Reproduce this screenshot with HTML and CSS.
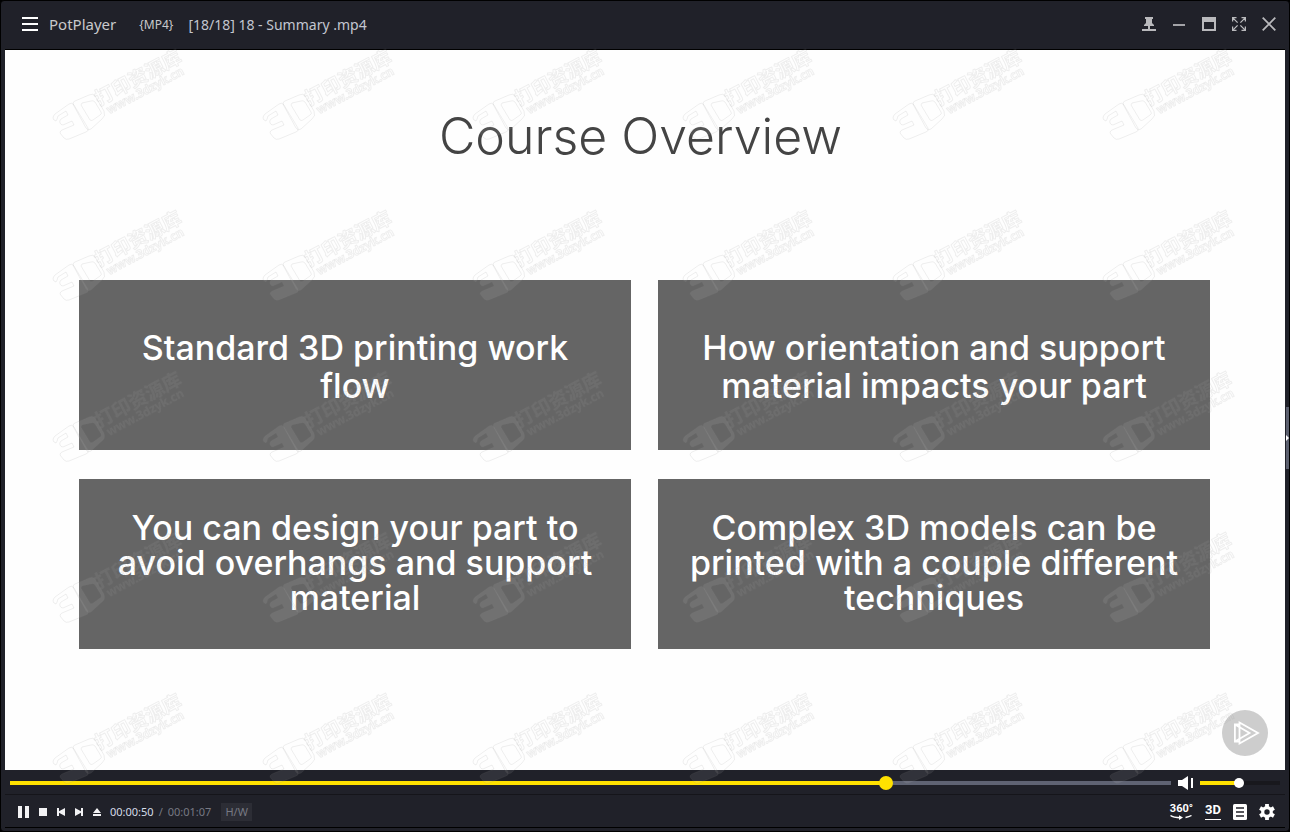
FILE: index.html
```html
<!DOCTYPE html>
<html lang="en">
<head>
<meta charset="utf-8">
<title>PotPlayer</title>
<link rel="stylesheet" href="styles.css">
</head>
<body>
<div class="player">
  <header class="titlebar">
    <button class="icon-btn menu" aria-label="Menu"><svg width="16" height="14" viewBox="0 0 16 14"><path d="M0 1h16M0 7h16M0 13h16" stroke="#fff" stroke-width="2"/></svg></button>
    <span class="app-name">PotPlayer</span>
    <span class="format">{MP4}</span>
    <h1 class="file-name">[18/18] 18 - Summary .mp4</h1>
    <div class="window-buttons">
      <button class="icon-btn" aria-label="Pin"><svg width="14" height="14" viewBox="0 0 14 14" fill="#b9b9bc"><path d="M3 0h8v2h-1v4l2 2v1H8v3h6v2H0v-2h6V9H2V8l2-2V2H3z"/></svg></button>
      <button class="icon-btn" aria-label="Minimize"><svg width="14" height="14" viewBox="0 0 14 14"><path d="M1 8h12" stroke="#a3a3a7" stroke-width="2"/></svg></button>
      <button class="icon-btn" aria-label="Maximize"><svg width="14" height="14" viewBox="0 0 14 14"><path d="M0 0h14v14H0zM2 5v7h10V5z" fill="#b9b9bc" fill-rule="evenodd"/></svg></button>
      <button class="icon-btn" aria-label="Full screen"><svg width="14" height="14" viewBox="0 0 14 14" fill="none" stroke="#b9b9bc" stroke-width="1.3"><path d="M.6 4.500V.6h3.900M9.500.6h3.900v3.900M13.400 9.500v3.900H9.500M4.500 13.400H.6V9.500M.6.6l5 5M13.400.6l-5 5M13.400 13.400l-5-5M.6 13.400l5-5"/></svg></button>
      <button class="icon-btn" aria-label="Close"><svg width="14" height="14" viewBox="0 0 14 14"><path d="M.7.7l12.600 12.600M13.300.7L.7 13.300" stroke="#b9b9bc" stroke-width="1.800"/></svg></button>
    </div>
  </header>

  <main class="video">
    <h2 class="slide-title">Course Overview</h2>
    <div class="topics">
      <p class="topic">Standard 3D printing work<br>flow</p>
      <p class="topic">How orientation and support<br>material impacts your part</p>
      <p class="topic topic-tight">You can design your part to<br>avoid overhangs and support<br>material</p>
      <p class="topic topic-tight">Complex 3D models can be<br>printed with a couple different<br>techniques</p>
    </div>
    <svg class="channel-logo" width="46" height="46" viewBox="0 0 46 46"><circle cx="23" cy="23" r="23" fill="#cdcdcd"/><g fill="none" stroke="#fff" stroke-width="1.800"><path d="M17.500 12.500L36 23 17.500 33.500z"/><path d="M17.500 14.500h-4.600v17h4.600M12.900 14.500L27.500 23l-14.600 8.500"/></g></svg>
    <button class="side-handle" aria-label="Open playlist"><svg width="3" height="6" viewBox="0 0 3 6"><path d="M0 0l3 3-3 3z" fill="#fff"/></svg></button>
  </main>

  <div class="seek-row">
    <input class="slider seek" type="range" min="0" max="1000" value="758" aria-label="Position" style="--fill:75.500%">
    <button class="icon-btn speaker" aria-label="Mute"><svg width="16" height="14" viewBox="0 0 16 14" fill="#fff"><path d="M0 4h4l6-4v14l-6-4H0zM13 2h2v10h-2z"/></svg></button>
    <input class="slider volume" type="range" min="0" max="100" value="48" aria-label="Volume" style="--fill:48%">
  </div>

  <footer class="controls">
    <div class="transport">
      <button class="icon-btn" aria-label="Pause"><svg width="11" height="12" viewBox="0 0 11 12"><path d="M0 0h4v12H0zM7 0h4v12H7z" fill="#f2f2f4"/></svg></button>
      <button class="icon-btn" aria-label="Stop"><svg width="8" height="8" viewBox="0 0 8 8"><path d="M0 0h8v8H0z" fill="#f2f2f4"/></svg></button>
      <button class="icon-btn" aria-label="Previous"><svg width="8" height="8" viewBox="0 0 8 8"><path d="M0 0h2v3.200L8 0v8L2 4.800V8H0z" fill="#f2f2f4"/></svg></button>
      <button class="icon-btn" aria-label="Next"><svg width="8" height="8" viewBox="0 0 8 8"><path d="M8 0H6v3.200L0 0v8l6-3.200V8h2z" fill="#f2f2f4"/></svg></button>
      <button class="icon-btn" aria-label="Open"><svg width="8" height="8" viewBox="0 0 8 8"><path d="M4 0l4 5H0zM0 6h8v2H0z" fill="#f2f2f4"/></svg></button>
    </div>
    <div class="time"><span class="now">00:00:50</span><span>/</span><span>00:01:07</span></div>
    <button class="decoder">H/W</button>
    <div class="options">
      <button class="icon-btn mode mode-360">360°<svg width="22" height="5" viewBox="0 0 22 5"><path d="M.5.500Q3 2.500 11 2.800M15.500 2.500Q19 2 21.500.500" fill="none" stroke="#fff" stroke-width="1.400"/><path d="M9 .2l4 2.400L9 5z" fill="#fff"/></svg></button>
      <button class="icon-btn mode mode-3d">3D</button>
      <button class="icon-btn" aria-label="Playlist"><svg width="14" height="16" viewBox="0 0 14 16"><rect width="14" height="16" rx="1.500" fill="#fff"/><path d="M3 4h8M3 8h8M3 12h8" stroke="#202129" stroke-width="1.600"/></svg></button>
      <button class="icon-btn" aria-label="Settings"><svg width="16" height="16" viewBox="0 0 16 16"><circle cx="8" cy="8" r="4.300" fill="none" stroke="#fff" stroke-width="3.200"/><path d="M8 0v3M8 13v3M1.070 4l2.600 1.500M12.330 10.500l2.600 1.500M1.070 12l2.600-1.500M12.330 5.500l2.600-1.500" stroke="#fff" stroke-width="3.800"/></svg></button>
    </div>
  </footer>

  <svg class="watermark" width="100%" height="100%" aria-hidden="true">
    <defs>
      <pattern id="mark" x="39" y="39" width="210" height="161" patternUnits="userSpaceOnUse">
        <g class="mark-logo">
          <path d="M13 78q0-2 2-4l14-10q3-2 5 1l14 23q1 3-2 4l-17 7q-3 1-5-1l-4-5q0-2 2-3l12-5-2-4-9 4q-2 0-3-2t1-4l7-4-2-4-8 5q-1 4-2 5-3-1-3-3z"/>
          <path fill-rule="evenodd" d="M34 66q-2-4 1-5l14-6q4-2 6 1l9 15q2 5-2 8l-11 10q-3 2-5-1zM41 65l9 15q1 1 3 0l7-5q2-1 1-3l-6-10q-2-2-4-1l-9 2z"/>
        </g>
        <g class="mark-text" transform="translate(61 65) rotate(-28)">
          <text class="mark-name" x="-2" y="0">打印资源库</text>
          <text class="mark-url" x="3" y="12">www.3dzyk.cn</text>
        </g>
      </pattern>
    </defs>
    <rect width="100%" height="100%" fill="url(#mark)"/>
  </svg>
</div>
</body>
</html>
```
FILE: styles.css
```css
* { box-sizing: border-box; }
body { margin: 0; background: #000; font-family: "Noto Sans", sans-serif; }

.player {
  position: relative;
  display: flex;
  flex-direction: column;
  height: 100vh;
  padding: 0 4px 3px;
  background: #202129;
  border: 1px solid #000;
  border-radius: 4px;
  overflow: hidden;
}

.icon-btn {
  display: flex;
  align-items: center;
  justify-content: center;
  padding: 0;
  border: 0;
  background: none;
  color: #fff;
}

.titlebar {
  display: flex;
  align-items: center;
  height: 49px;
  padding: 0 9px 2px 17px;
  border-bottom: 1px solid #000;
}
.app-name { margin-left: 11px; font-size: 15px; color: #c9c9cc; }
.format { margin-left: 23px; font-size: 12px; color: #c9c9cc; }
.file-name { margin: 0 0 0 15px; font-size: 14px; font-weight: 400; color: #c3c6d0; }
.window-buttons { display: flex; gap: 16px; margin-left: auto; }

.video {
  position: relative;
  flex: 1;
  background: #fefefe;
}
.slide-title {
  margin: 0;
  padding: 52px 9px 0 0;
  font: 300 50px/68px Inter, sans-serif;
  text-align: center;
  color: #444;
}
.topics {
  display: grid;
  grid-template-columns: 1fr 1fr;
  grid-auto-rows: 170px;
  gap: 29px 27px;
  padding: 110px 75px 0 74px;
}
.topic {
  display: flex;
  align-items: center;
  justify-content: center;
  margin: 0;
  padding-top: 3px;
  background: #656565;
  color: #fff;
  font: 500 34px/38px Inter, sans-serif;
  text-align: center;
}
.topic-tight { padding: 0 0 3px; line-height: 35px; }
.channel-logo { position: absolute; right: 17px; bottom: 14px; }
.side-handle {
  position: absolute;
  top: 357px;
  right: -4px;
  display: flex;
  align-items: center;
  width: 3px;
  height: 62px;
  padding: 0;
  border: 0;
  background: #5b5f6e;
}

.seek-row {
  display: flex;
  align-items: center;
  height: 25px;
  padding: 1px 5px 0;
  border-bottom: 1px solid #15151a;
}
.speaker { margin: 0 6px 0 7px; }
.slider {
  appearance: none;
  height: 14px;
  margin: 0;
  background: linear-gradient(#ffe100, #ffe100) left / var(--fill) 4px no-repeat,
    linear-gradient(var(--rest), var(--rest)) left / 100% 4px no-repeat;
}
.slider::-webkit-slider-thumb {
  appearance: none;
  width: var(--thumb);
  height: var(--thumb);
  border-radius: 50%;
  background: var(--knob);
}
.seek { --rest: #5f6373; --thumb: 14px; --knob: #ffe100; flex: 1; min-width: 0; }
.volume { --rest: #18181d; --thumb: 10px; --knob: #fff; width: 80px; }

.controls {
  display: flex;
  align-items: center;
  height: 33px;
  padding: 1px 10px 0 13px;
  border-bottom: 1px solid #000;
}
.transport { display: flex; align-items: center; gap: 10px; }
.time {
  display: flex;
  gap: 5px;
  margin-left: 9px;
  font-size: 11px;
  color: #777983;
}
.now { color: #d5dce8; }
.decoder {
  height: 18px;
  margin-left: 10px;
  padding: 0 4px;
  border: 0;
  background: #2c2d35;
  color: #777983;
  font: 11px/18px "Noto Sans", sans-serif;
}
.options { display: flex; align-items: center; gap: 12px; margin-left: auto; }
.mode { font: 700 12px/12px Roboto, sans-serif; }
.mode-360 { flex-direction: column; font-size: 11px; }
.mode-3d { height: 17px; padding-bottom: 2px; border-bottom: 1px solid #fff; font-size: 13px; }

.watermark { position: absolute; inset: 0; pointer-events: none; }
.mark-logo,
.mark-text {
  fill: rgba(255, 255, 255, 0.08);
  stroke: rgba(110, 110, 110, 0.11);
  stroke-width: 1;
  stroke-linejoin: round;
}
.mark-text { fill: rgba(255, 255, 255, 0.05); }
.mark-name { font: 700 19px "Noto Sans CJK SC", sans-serif; }
.mark-url { font: 700 12px "Noto Sans", sans-serif; }
```
